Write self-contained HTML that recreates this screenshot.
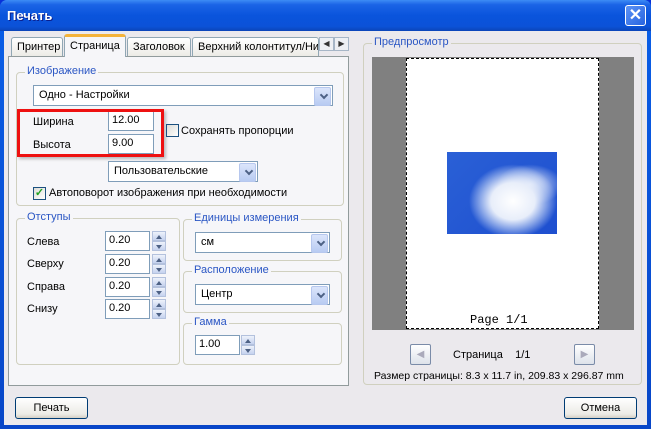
<!DOCTYPE html>
<html><head><meta charset="utf-8"><style>
*{box-sizing:border-box;margin:0;padding:0}
body{width:651px;height:429px;overflow:hidden;font-family:"Liberation Sans",Tahoma,sans-serif;font-size:11px;color:#000;background:#0831d9}
.a{position:absolute}
#win{position:absolute;left:0;top:0;width:651px;height:429px;background:linear-gradient(#0a5fe8,#0846c8);border-radius:7px 7px 0 0}
#title{left:0;top:0;width:651px;height:31px;background:linear-gradient(#3d8cf5 0%,#1b64e6 15%,#0a54dc 50%,#0b52d8 85%,#0b44b8 100%);border-radius:7px 7px 0 0}
#body{left:4px;top:31px;width:643px;height:394px;background:#ebe9ed}
.tab{position:absolute;top:37px;height:19px;background:linear-gradient(#fff,#ecebe6);border:1px solid #91a7b4;border-bottom:none;padding:3px 5px 0;white-space:nowrap;overflow:hidden;border-radius:3px 3px 0 0}
.grp{position:absolute;border:1px solid #d0d0bf;border-radius:4px}
.gl{position:absolute;background:inherit;color:#2a56c4;padding:0 2px;top:-8px;left:8px;white-space:nowrap}
.inp{position:absolute;background:#fff;border:1px solid #7f9db9;padding:2px 3px;height:20px}
.dd{position:absolute;background:#fff;border:1px solid #7f9db9;padding:3px 5px;height:21px}
.dd:after{content:"";position:absolute;right:1px;top:1px;width:15px;height:17px;background:linear-gradient(#dbe5fb,#b8cbf2);border:1px solid #b6c7ee;border-radius:2px}
.dd i{position:absolute;right:5px;top:6px;width:6px;height:6px;border-right:2px solid #4d6185;border-bottom:2px solid #4d6185;transform:rotate(45deg);z-index:2}
.sp{position:absolute;width:14px;height:20px}
.sp b{display:block;height:10px;background:linear-gradient(#eef2fb,#c5d2ef);border:1px solid #b3c1dd;position:relative}
.sp b:after{content:"";position:absolute;left:3px;top:2px;border:3px solid transparent}
.sp b.u:after{border-bottom:4px solid #4d6185;top:0}
.sp b.d:after{border-top:4px solid #4d6185;top:3px}
.btn{position:absolute;border:1px solid #003c74;border-radius:3px;background:linear-gradient(#fff,#ecebe6 80%,#d6d0c5);text-align:center;padding-top:4px;height:22px}
.cb{position:absolute;width:13px;height:13px;border:1px solid #1c5180;background:linear-gradient(135deg,#dcdcd7,#fff)}
</style></head><body>
<div id="win">
<div class="a" id="title"></div>
<div class="a" style="left:7px;top:8px;color:#fff;font-weight:bold;font-size:13px;text-shadow:1px 1px #0a1e8c">Печать</div>
<div class="a" style="left:625px;top:5px;width:21px;height:21px;border:1px solid #fff;border-radius:3px;background:linear-gradient(135deg,#5d93f5,#2663e0);color:#fff;font-weight:bold;font-size:16px;text-align:center;line-height:19px">✕</div>
<div class="a" id="body"></div>

<!-- tab panel -->
<div class="a" style="left:8px;top:56px;width:341px;height:330px;background:#f6f6f9;border:1px solid #919b9c"></div>
<div class="tab" style="left:11px;width:52px">Принтер</div>
<div class="tab" style="left:64px;top:34px;height:23px;width:62px;background:#f6f6f9;border-top:3px solid #f4b33a;z-index:2;padding-top:3px">Страница</div>
<div class="tab" style="left:127px;width:64px">Заголовок</div>
<div class="tab" style="left:192px;width:127px">Верхний колонтитул/Ни</div>
<div class="a" style="left:319px;top:37px;width:15px;height:14px;border:1px solid #a7b6c7;background:#eef0f4;font-size:8px;text-align:center;line-height:12px;color:#333">◀</div>
<div class="a" style="left:334px;top:37px;width:15px;height:14px;border:1px solid #a7b6c7;background:#eef0f4;font-size:8px;text-align:center;line-height:12px;color:#333">▶</div>

<div class="grp" style="left:16px;top:72px;width:328px;height:134px;background:#f6f6f9"><span class="gl">Изображение</span></div>
<div class="dd" style="left:33px;top:85px;width:300px">Одно - Настройки<i></i></div>
<div class="a" style="left:33px;top:116px">Ширина</div>
<div class="a" style="left:33px;top:139px">Высота</div>
<div class="inp" style="left:108px;top:111px;width:46px">12.00</div>
<div class="inp" style="left:108px;top:134px;width:46px">9.00</div>
<div class="a" style="left:17px;top:109px;width:147px;height:48px;border:3px solid #ee1111;box-shadow:2px 2px 3px rgba(0,0,0,.25)"></div>
<div class="cb" style="left:166px;top:124px"></div>
<div class="a" style="left:181px;top:125px">Сохранять пропорции</div>
<div class="dd" style="left:108px;top:161px;width:150px">Пользовательские<i></i></div>
<div class="cb" style="left:33px;top:187px;color:#21a121;font-size:11px;line-height:11px;text-align:center;font-weight:bold">✓</div>
<div class="a" style="left:49px;top:187px">Автоповорот изображения при необходимости</div>

<div class="grp" style="left:16px;top:218px;width:164px;height:147px;background:#f6f6f9"><span class="gl">Отступы</span></div>
<div class="a" style="left:27px;top:236px">Слева</div>
<div class="a" style="left:27px;top:258px">Сверху</div>
<div class="a" style="left:27px;top:281px">Справа</div>
<div class="a" style="left:27px;top:303px">Снизу</div>
<div class="inp" style="left:105px;top:231px;width:45px">0.20</div>
<div class="inp" style="left:105px;top:254px;width:45px">0.20</div>
<div class="inp" style="left:105px;top:277px;width:45px">0.20</div>
<div class="inp" style="left:105px;top:299px;width:45px">0.20</div>
<div class="sp" style="left:152px;top:231px"><b class="u"></b><b class="d"></b></div>
<div class="sp" style="left:152px;top:254px"><b class="u"></b><b class="d"></b></div>
<div class="sp" style="left:152px;top:277px"><b class="u"></b><b class="d"></b></div>
<div class="sp" style="left:152px;top:299px"><b class="u"></b><b class="d"></b></div>

<div class="grp" style="left:183px;top:219px;width:159px;height:42px;background:#f6f6f9"><span class="gl">Единицы измерения</span></div>
<div class="dd" style="left:195px;top:232px;width:135px">см<i></i></div>
<div class="grp" style="left:183px;top:271px;width:159px;height:42px;background:#f6f6f9"><span class="gl">Расположение</span></div>
<div class="dd" style="left:195px;top:284px;width:135px">Центр<i></i></div>
<div class="grp" style="left:183px;top:323px;width:159px;height:42px;background:#f6f6f9"><span class="gl">Гамма</span></div>
<div class="inp" style="left:195px;top:335px;width:45px">1.00</div>
<div class="sp" style="left:241px;top:335px"><b class="u"></b><b class="d"></b></div>

<!-- preview -->
<div class="grp" style="left:363px;top:43px;width:279px;height:342px;background:#ebe9ed"><span class="gl">Предпросмотр</span></div>
<div class="a" style="left:372px;top:57px;width:262px;height:273px;background:#808080"></div>
<div class="a" style="left:406px;top:58px;width:193px;height:271px;background:#fff;border:1px dashed #000"></div>
<div class="a" style="left:447px;top:152px;width:110px;height:82px;background:radial-gradient(ellipse 40% 45% at 60% 60%,#fff 0%,#e8eefa 50%,rgba(200,215,245,.6) 75%,rgba(40,90,210,0) 100%),radial-gradient(ellipse 30% 25% at 75% 40%,#fff,rgba(255,255,255,0) 100%),linear-gradient(135deg,#2a60d6,#1e4fcf)"></div>
<div class="a" style="left:470px;top:313px;font-family:'Liberation Mono',monospace;font-size:12px">Page 1/1</div>
<div class="a" style="left:410px;top:344px;width:21px;height:21px;border:1px solid #7a8ba8;border-radius:2px;background:linear-gradient(#fff,#dde2ea);color:#aab;text-align:center;font-size:10px;line-height:19px">◀</div>
<div class="a" style="left:574px;top:344px;width:21px;height:21px;border:1px solid #7a8ba8;border-radius:2px;background:linear-gradient(#fff,#dde2ea);color:#aab;text-align:center;font-size:10px;line-height:19px">▶</div>
<div class="a" style="left:453px;top:349px;white-space:pre">Страница    1/1</div>
<div class="a" style="left:374px;top:370px;white-space:nowrap;font-size:10.5px">Размер страницы: 8.3 x 11.7 in, 209.83 x 296.87 mm</div>

<div class="btn" style="left:15px;top:397px;width:73px">Печать</div>
<div class="btn" style="left:564px;top:397px;width:73px">Отмена</div>
</div>
</body></html>
